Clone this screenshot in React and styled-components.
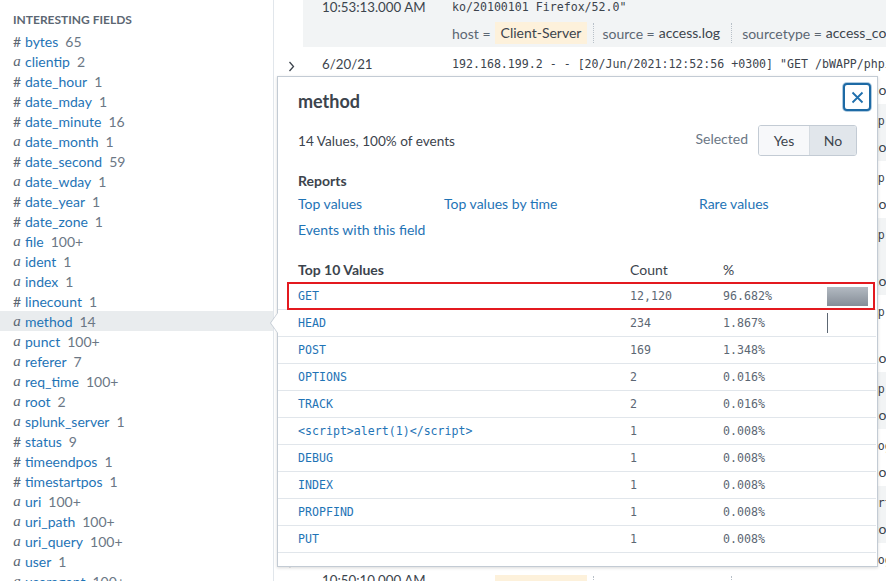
import React from 'react';
import styled, { createGlobalStyle } from 'styled-components';

const SANS = 'Lato, "Open Sans", "Liberation Sans", sans-serif';
const MONO = '"DejaVu Sans Mono", "Liberation Mono", monospace';

const FIELDS = [
  ['#', 'bytes', '65'], ['a', 'clientip', '2'], ['#', 'date_hour', '1'],
  ['#', 'date_mday', '1'], ['#', 'date_minute', '16'], ['a', 'date_month', '1'],
  ['#', 'date_second', '59'], ['a', 'date_wday', '1'], ['#', 'date_year', '1'],
  ['#', 'date_zone', '1'], ['a', 'file', '100+'], ['a', 'ident', '1'],
  ['a', 'index', '1'], ['#', 'linecount', '1'], ['a', 'method', '14'],
  ['a', 'punct', '100+'], ['a', 'referer', '7'], ['a', 'req_time', '100+'],
  ['a', 'root', '2'], ['a', 'splunk_server', '1'], ['#', 'status', '9'],
  ['#', 'timeendpos', '1'], ['#', 'timestartpos', '1'], ['a', 'uri', '100+'],
  ['a', 'uri_path', '100+'], ['a', 'uri_query', '100+'], ['a', 'user', '1'],
  ['a', 'useragent', '100+'],
];

const ip = '192.168.199.2 - - [20/Jun/2021:';
const EVENTS = [
  { date: '6/20/21', time: '10:53:13.000 AM', expanded: true, raw: [ip + '12:53:13 +0300] "GET /bWAPP/php', 'ko/20100101 Firefox/52.0"'] },
  { date: '6/20/21', time: '10:52:56.000 AM', raw: [ip + '12:52:56 +0300] "GET /bWAPP/phpi18n.php HTTP/1.1"'] },
  { date: '6/20/21', time: '10:52:40.000 AM', raw: [ip + '12:52:40 +0300] "GET /bWAPP/php HTTP/1.1"'] },
  { date: '6/20/21', time: '10:52:21.000 AM', raw: [ip + '12:52:21 +0300] "GET /bWAPP/php HTTP/1.1"'] },
  { date: '6/20/21', time: '10:51:58.000 AM', raw: [ip + '12:51:58 +0300] "GET /bWAPP/php HTTP/1.1"', 'ko/20100101 Firefox/52.0"'] },
  { date: '6/20/21', time: '10:51:34.000 AM', raw: [ip + '12:51:34 +0300] "GET /bWAPP/php HTTP/1.1"', 'ko/20100101 Firefox/52.0"'] },
  { date: '6/20/21', time: '10:51:10.000 AM', raw: [ip + '12:51:10 +0300] "GET /bWAPP/php HTTP/1.1"'] },
  { date: '6/20/21', time: '10:50:52.000 AM', raw: [ip + '12:50:52 +0300] "POST /bWAPP/login.php HTTP/1.1"'] },
  { date: '6/20/21', time: '10:50:31.000 AM', raw: [ip + '12:50:31 +0300] "GET /bWAPP/portal.php HTTP/1.1"'] },
  { date: '6/20/21', time: '10:50:10.000 AM', raw: [ip + '12:50:10 +0300] "POST /bWAPP/login.php HTTP/1.1"'] },
];

const VALUES = [
  ['GET', '12,120', 96.682], ['HEAD', '234', 1.867], ['POST', '169', 1.348],
  ['OPTIONS', '2', 0.016], ['TRACK', '2', 0.016], ['<script>alert(1)</script>', '1', 0.008],
  ['DEBUG', '1', 0.008], ['INDEX', '1', 0.008], ['PROPFIND', '1', 0.008], ['PUT', '1', 0.008],
];

const barWidth = (pct) => Math.floor(pct * 0.43 + 0.2);

export default function App() {
  return (
    <>
      <GlobalStyle />
      <Page>
        <Sidebar>
          <SectionTitle>Interesting Fields</SectionTitle>
          {FIELDS.map(([type, name, count]) => (
            <FieldRow key={name} $active={name === 'method'}>
              <TypeIcon $alpha={type === 'a'}>{type}</TypeIcon>
              <FieldName>{name}</FieldName>
              <FieldCount>{count}</FieldCount>
            </FieldRow>
          ))}
        </Sidebar>

        <Events>
          <EventList>
            {EVENTS.map((ev, i) => (
              <EventRow key={i} $striped={i % 2 === 0}>
                <ExpandCell>
                  <svg width="7" height="11" viewBox="0 0 7 11">
                    <path d={ev.expanded ? 'M0.5 3 L3.5 7 L6.5 3' : 'M1.5 1 L5.5 5.5 L1.5 10'} fill="none" stroke="#3c444d" strokeWidth="1.3" />
                  </svg>
                </ExpandCell>
                <TimeCell>
                  <TimeLine>{ev.date}</TimeLine>
                  <TimeLine>{ev.time}</TimeLine>
                </TimeCell>
                <EventBody>
                  {ev.raw.map((line, j) => <RawLine key={j}>{line}</RawLine>)}
                  <FieldLine>
                    <FieldKey>host =</FieldKey>
                    <FieldValue $tag>Client-Server</FieldValue>
                    <Sep />
                    <FieldKey>source =</FieldKey>
                    <FieldValue>access.log</FieldValue>
                    <Sep $wide />
                    <FieldKey>sourcetype =</FieldKey>
                    <FieldValue>access_combined</FieldValue>
                  </FieldLine>
                </EventBody>
              </EventRow>
            ))}
          </EventList>
        </Events>

        <Popover>
          <CloseButton aria-label="Close">
            <svg width="13" height="13" viewBox="0 0 13 13">
              <path d="M1.5 1.5 L11.5 11.5 M11.5 1.5 L1.5 11.5" stroke="#1f6fad" strokeWidth="1.8" fill="none" />
            </svg>
          </CloseButton>
          <PopTitle>method</PopTitle>
          <SummaryRow>
            <Summary>14 Values, 100% of events</Summary>
            <SelectedGroup>
              <SelectedLabel>Selected</SelectedLabel>
              <Toggle>
                <ToggleBtn>Yes</ToggleBtn>
                <ToggleBtn $active>No</ToggleBtn>
              </Toggle>
            </SelectedGroup>
          </SummaryRow>
          <SectionHead>Reports</SectionHead>
          <ReportLinks>
            <LinkText>Top values</LinkText>
            <LinkText>Top values by time</LinkText>
            <LinkText>Rare values</LinkText>
            <LinkText>Events with this field</LinkText>
          </ReportLinks>
          <Table>
            <HeadRow>
              <HeadCell $strong>Top 10 Values</HeadCell>
              <HeadCell>Count</HeadCell>
              <HeadCell>%</HeadCell>
              <span />
            </HeadRow>
            {VALUES.map(([value, count, pct], i) => (
              <ValueRow key={value}>
                {i === 0 && <Marked />}
                <ValueCell>{value}</ValueCell>
                <NumCell>{count}</NumCell>
                <NumCell>{pct.toFixed(3)}%</NumCell>
                <BarCell>
                  <Bar $thin={barWidth(pct) < 3} style={{ width: barWidth(pct) }} />
                </BarCell>
              </ValueRow>
            ))}
          </Table>
        </Popover>
      </Page>
    </>
  );
}

/* ========== Styled ========== */

const GlobalStyle = createGlobalStyle`
  * { box-sizing: border-box; }
  body { margin: 0; background: #fff; font-family: ${SANS}; color: #3c444d; }
`;

const Page = styled.div`
  position: relative; display: flex;
  width: 886px; height: 581px; overflow: hidden; background: #fff;
`;

const Sidebar = styled.div`
  width: 274px; flex-shrink: 0; padding-top: 10px;
  border-right: 1px solid #e1e6eb; background: #fff;
`;

const SectionTitle = styled.div`
  height: 21px; line-height: 20px; padding-left: 13px;
  font-size: 12px; font-weight: 700; text-transform: uppercase;
  color: #5c6773;
`;

const FieldRow = styled.div`
  display: flex; align-items: center; gap: 5px;
  height: 20px; padding-left: 13px;
  background: ${({ $active }) => ($active ? '#e9ecee' : 'transparent')};
  font-size: 14px;
`;

const TypeIcon = styled.span`
  width: 8px; text-align: center; color: #5c6773;
  font-family: ${({ $alpha }) => ($alpha ? '"Liberation Serif", serif' : SANS)};
  font-style: ${({ $alpha }) => ($alpha ? 'italic' : 'normal')};
  font-size: ${({ $alpha }) => ($alpha ? '15px' : '14px')};
  margin-right: -1px;
`;

const FieldName = styled.span`
  color: #1f74b6;
`;

const FieldCount = styled.span`
  color: #6b7785; margin-left: 2px;
`;

const Events = styled.div`
  flex: 1; overflow: hidden;
`;

const EventList = styled.div`
  margin-top: -30px;
`;

const EventRow = styled.div`
  display: flex; padding: 7px 0 3px;
  background: ${({ $striped }) => ($striped ? '#f2f4f5' : '#fff')};
`;

const ExpandCell = styled.div`
  width: 29px; flex-shrink: 0; padding: 9px 0 0 14px;
  margin: -7px 0 -3px; background: #fff;
`;

const TimeCell = styled.div`
  width: 149px; flex-shrink: 0; padding-left: 19px;
`;

const TimeLine = styled.div`
  height: 20px; line-height: 20px; font-size: 13.3px; color: #3c444d;
  white-space: nowrap;
`;

const EventBody = styled.div`
  flex: 1; min-width: 0;
`;

const RawLine = styled.div`
  height: 20px; line-height: 20px; white-space: nowrap;
  font-family: ${MONO}; font-size: 11.6px; color: #3c444d;
`;

const FieldLine = styled.div`
  display: flex; align-items: center; margin-top: 5px; height: 22px;
  font-size: 14px; white-space: nowrap;
`;

const FieldKey = styled.span`
  color: #5c6773; margin-right: 4px;
`;

const FieldValue = styled.span`
  color: #3c444d; line-height: 22px; padding: 0 ${({ $tag }) => ($tag ? '6px' : '0')};
  background: ${({ $tag }) => ($tag ? '#fdf1db' : 'transparent')};
`;

const Sep = styled.span`
  height: 20px; border-left: 1px dotted #b8c0c8;
  margin: ${({ $wide }) => ($wide ? '0 10px 0 11px' : '0 8px 0 6px')};
`;

const Popover = styled.div`
  position: absolute; left: 277px; top: 76px;
  width: 601px; height: 491px; padding-top: 13px;
  background: #fff; border: 1px solid #c3cbd4;
  box-shadow: 0 1px 3px rgba(0, 0, 0, 0.15);

  &::before, &::after {
    content: ''; position: absolute; top: 235px;
    border-style: solid; border-color: transparent;
  }
  &::before { left: -8px; border-width: 11px 8px 11px 0; border-right-color: #c3cbd4; }
  &::after { left: -7px; top: 236px; border-width: 10px 7px 10px 0; border-right-color: #fff; }
`;

const CloseButton = styled.button`
  position: absolute; top: 6px; right: 6px;
  width: 28px; height: 28px; padding: 0;
  display: flex; align-items: center; justify-content: center;
  background: #fff; border: 2px solid #1d6aa5; border-radius: 4px;
  box-shadow: 0 0 0 1px rgba(29, 106, 165, 0.35);
`;

const PopTitle = styled.h2`
  margin: 0; padding: 0 20px; height: 22px; line-height: 22px;
  font-size: 18px; font-weight: 700; color: #3c444d;
`;

const SummaryRow = styled.div`
  display: flex; align-items: center; justify-content: space-between;
  margin-top: 13px; padding: 0 20px;
`;

const Summary = styled.div`
  font-size: 13.6px; color: #3c444d;
`;

const SelectedGroup = styled.div`
  display: flex; align-items: center; gap: 10px;
`;

const SelectedLabel = styled.span`
  font-size: 14px; color: #6b7785; margin-top: -4px;
`;

const Toggle = styled.div`
  display: flex; height: 31px;
  border: 1px solid #c3cbd4; border-radius: 3px; overflow: hidden;
`;

const ToggleBtn = styled.span`
  display: flex; align-items: center; justify-content: center;
  width: ${({ $active }) => ($active ? '47px' : '50px')};
  font-size: 14px; color: #3c444d;
  background: ${({ $active }) => ($active ? '#e1e6eb' : '#f7f8fa')};
  & + & { border-left: 1px solid #d5dbe1; }
`;

const SectionHead = styled.div`
  margin-top: 15px; padding: 0 20px; line-height: 20px;
  font-size: 14px; font-weight: 700; color: #3c444d;
`;

const ReportLinks = styled.div`
  display: grid; grid-template-columns: 146px 255px 1fr; row-gap: 6px;
  margin-top: 3px; padding: 0 20px;
`;

const LinkText = styled.span`
  line-height: 20px; font-size: 14px; color: #1f74b6;
`;

const Table = styled.div`
  margin-top: 15px;
`;

const tableCols = `
  display: grid; grid-template-columns: 332px 93px 104px 1fr; align-items: center;
  padding-left: 20px;
`;

const HeadRow = styled.div`
  ${tableCols}
  height: 28px;
`;

const HeadCell = styled.span`
  font-size: 14px; color: #3c444d;
  font-weight: ${({ $strong }) => ($strong ? 700 : 400)};
`;

const ValueRow = styled.div`
  ${tableCols}
  position: relative; height: 27px; margin-right: 1px;
  border-bottom: 1px solid #e1e6eb;
`;

const Marked = styled.span`
  position: absolute; left: 9px; right: 1px; top: -1px; bottom: -1px;
  border: 2px solid #e3191f;
`;

const ValueCell = styled.span`
  font-family: ${MONO}; font-size: 11.6px; color: #1f74b6; white-space: nowrap;
`;

const NumCell = styled.span`
  font-family: ${MONO}; font-size: 11.6px; color: #5c6773;
`;

const BarCell = styled.span`
  display: flex; align-items: center; height: 100%;
`;

const Bar = styled.span`
  height: ${({ $thin }) => ($thin ? '20px' : '19px')};
  background: ${({ $thin }) => ($thin ? '#5c6773' : 'linear-gradient(#b3bac2, #858d97)')};
`;
